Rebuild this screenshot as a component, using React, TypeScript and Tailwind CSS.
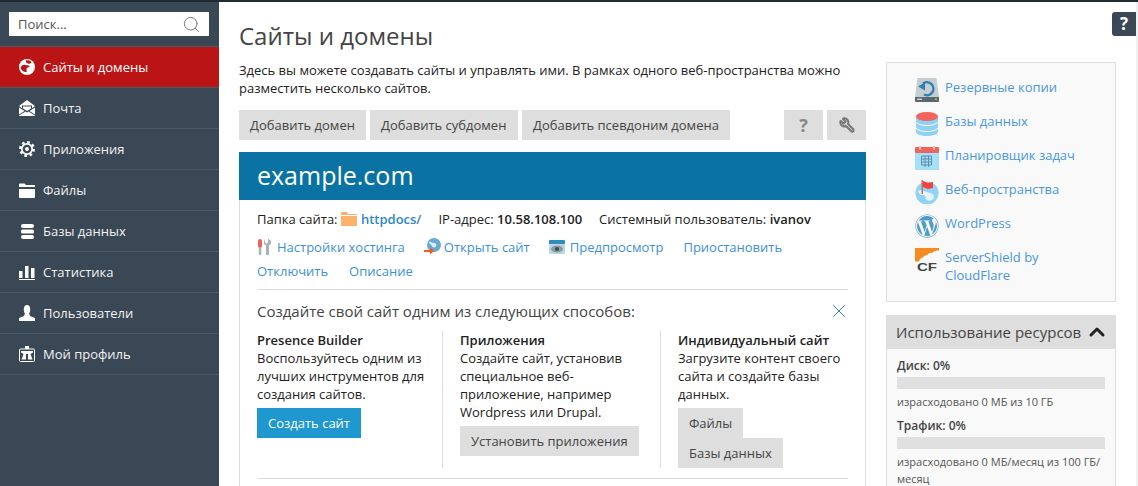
import { Search, X, ChevronUp, Wrench } from "lucide-react"
import { FaWordpress } from "react-icons/fa"
import type { ReactNode } from "react"

const GlobeIcon = () => (
  <svg width="16" height="16" viewBox="0 0 16 16">
    <circle cx="8" cy="8" r="8" fill="#fff" />
    <path d="M1.500 8.500C3 6 5 5.500 6.500 6s3.500 0 4 1-2.500 1.500-3 2.500 1 2 0 3.500c-2 .5-5-1-6-4.500zM7 1.500c2-.5 4 0 5.500 1.500 0 1.500-2 2-3.500 1.500S6.500 3 7 1.500z" fill="#bb1414" />
  </svg>
)
const MailIcon = () => (
  <svg width="16" height="16" viewBox="0 0 16 16" fill="#fff">
    <path d="M0 6 8 0l8 6-3 2.200V5.500H3v2.700z" />
    <path d="M4 6.500h8v2L8 11 4 8.500z" />
    <path d="M0 7.500l5.500 3.500L0 14.500zM16 7.500 10.500 11l5.500 3.500zM0 16v-.5l6.500-4L8 12.500l1.500-1 6.500 4v.5z" />
  </svg>
)
const GearIcon = () => (
  <svg width="16" height="16" viewBox="0 0 16 16">
    <circle cx="8" cy="8" r="5.200" fill="none" stroke="#fff" strokeWidth="1.800" />
    <circle cx="8" cy="8" r="6.800" fill="none" stroke="#fff" strokeWidth="2.400" strokeDasharray="2.600 2.740" />
    <circle cx="8" cy="8" r="2" fill="#fff" />
  </svg>
)
const FolderIcon = () => (
  <svg width="16" height="15" viewBox="0 0 16 15" fill="#fff">
    <path d="M0 1.500A1 1 0 0 1 1 .5h4.500L7 2h9v2H0z" />
    <path d="M0 6h16v8a1 1 0 0 1-1 1H1a1 1 0 0 1-1-1z" />
  </svg>
)
const DbIcon = () => (
  <svg width="13" height="15" viewBox="0 0 13 15" fill="#fff">
    <rect x="0" y="0" width="13" height="4" rx="2" />
    <rect x="0" y="5.500" width="13" height="4" rx="1.500" />
    <rect x="0" y="11" width="13" height="4" rx="2" />
  </svg>
)
const StatsIcon = () => (
  <svg width="16" height="15" viewBox="0 0 16 15" fill="#fff">
    <rect x="0" y="6" width="3.500" height="7" />
    <rect x="6" y="1" width="3.500" height="12" />
    <rect x="12" y="3" width="3.500" height="10" />
    <rect x="0" y="14" width="16" height="1" />
  </svg>
)
const UserIcon = () => (
  <svg width="16" height="16" viewBox="0 0 16 16" fill="#fff">
    <ellipse cx="8" cy="4.500" rx="3.200" ry="4.500" />
    <path d="M6 8h4l1 3 5 2v3H0v-3l5-2z" />
  </svg>
)
const ProfileIcon = () => (
  <svg width="16" height="16" viewBox="0 0 16 16">
    <rect x="0.500" y="3" width="15" height="12.500" rx="1" fill="none" stroke="#fff" />
    <rect x="6" y="0" width="4" height="3" fill="#fff" />
    <path d="M2 5h12v1.500l-2.500 1.500 2 5.500H9V8H7v5.500H2.500L4.500 8 2 6.500z" fill="#fff" />
  </svg>
)

const BackupIcon = () => (
  <svg width="24" height="24" viewBox="0 0 24 24">
    <path d="M2.500 0h19L24 19H0z" fill="#c5ced3" />
    <path d="M0 19h24v4a1 1 0 0 1-1 1H1a1 1 0 0 1-1-1z" fill="#5d676c" />
    <rect x="2" y="20.500" width="5" height="1.500" fill="#c5ced3" />
    <rect x="20" y="20.500" width="2" height="1.500" fill="#9bd24b" />
    <path d="M8 5.500a6.500 6.500 0 1 1 1 11" fill="none" stroke="#2f7fb0" strokeWidth="2.400" />
    <path d="M3 8.500l7-4v8z" fill="#2f7fb0" />
  </svg>
)
const ColorDbIcon = () => (
  <svg width="24" height="24" viewBox="0 0 24 24">
    <path d="M1 4.500h22V20c0 2-5 4-11 4S1 22 1 20z" fill="#8fd0f5" />
    <ellipse cx="12" cy="4.500" rx="11" ry="4.500" fill="#f4625c" />
    <path d="M1 10c2 2.500 6 3.500 11 3.500S21 12.500 23 10M1 16c2 2.500 6 3.500 11 3.500S21 18.500 23 16" fill="none" stroke="#fff" />
  </svg>
)
const CalendarIcon = () => (
  <svg width="24" height="24" viewBox="0 0 24 24">
    <rect x="0" y="2" width="24" height="22" fill="#a5e0fb" />
    <rect x="0" y="1" width="24" height="6" rx="1" fill="#f4625c" />
    <rect x="4" y="0" width="2" height="4" fill="#f9c4bf" />
    <rect x="18" y="0" width="2" height="4" fill="#f9c4bf" />
    <path d="M6.500 10h10v9h-10zM10 10v11M13.500 10v11M6.500 13h10M6.500 16h10" fill="none" stroke="#5f8fa8" />
  </svg>
)
const WebspaceIcon = () => (
  <svg width="24" height="24" viewBox="0 0 24 24">
    <circle cx="12" cy="13" r="11.500" fill="#8fd3f5" />
    <path d="M3 11c3-2 6 0 9 1s6 1 7 4-4 6-7 4 0-5-4-5-4-2-5-4z" fill="#e4f5fd" />
    <rect x="6.500" y="0" width="1.500" height="14" fill="#c96a66" />
    <path d="M8 1l5 2 5-1v6l-5 1-5-2z" fill="#f4423a" />
  </svg>
)
const CloudflareIcon = () => (
  <svg width="24" height="24" viewBox="0 0 24 24">
    <path d="M0 0h24v2.500c-3 0-5 .5-7 2.500-2-.5-4 .5-5 2.500-2-.5-3 .5-4 2-2 0-3 1-4 4H0z" fill="#f6891f" />
    <text x="12" y="23" textAnchor="middle" textLength="20" lengthAdjust="spacingAndGlyphs" fontFamily="'Liberation Sans', sans-serif" fontWeight="700" fontSize="11" fill="#444">CF</text>
  </svg>
)
const OrangeFolder = () => (
  <svg width="16" height="14" viewBox="0 0 16 14" className="mr-1 inline-block">
    <path d="M0 1a1 1 0 0 1 1-1h5l1 2h9v12H0z" fill="#fbb36b" />
    <rect x="0" y="3" width="16" height="1" fill="#fff" />
  </svg>
)
const HostingIcon = () => (
  <svg width="16" height="16" viewBox="0 0 16 16">
    <rect x="1" y="0" width="4" height="9" rx="2" fill="#f0625c" />
    <rect x="1.800" y="8" width="2.500" height="8" rx="1" fill="#aab2b6" />
    <path d="M8 0v3l1.500 2L11 3V0h.5c2 1 3 2 2.500 4-.5 1.500-1 2-2 2.500V15a1 1 0 0 1-3 0V6.500C7.500 6 7 5 7 3.500 7 2 7.500 1 8 0z" fill="#aab2b6" />
  </svg>
)
const OpenSiteIcon = () => (
  <svg width="17" height="17" viewBox="0 0 17 17">
    <circle cx="10" cy="7" r="7" fill="#69a9d2" />
    <path d="M5 4c2-1 3 1 5 1s3 1 2 3-3 2-4 0-3-2-3-4z" fill="#d9eefa" />
    <path d="M0 12h6V9.500l4 3.500-4 3.500V14H0z" fill="#f25a1e" />
  </svg>
)
const PreviewIcon = () => (
  <svg width="16" height="14" viewBox="0 0 16 14">
    <rect x="0" y="0" width="16" height="14" rx="1.500" fill="#b8d8e8" />
    <rect x="0" y="0" width="16" height="4" rx="1" fill="#2f8dbb" />
    <ellipse cx="8" cy="9" rx="6" ry="3.500" fill="#8a9aa2" />
    <circle cx="8" cy="9" r="2" fill="#3d4a52" />
  </svg>
)

const NAV: { label: string; icon: ReactNode; active?: boolean }[] = [
  { label: "Сайты и домены", icon: <GlobeIcon />, active: true },
  { label: "Почта", icon: <MailIcon /> },
  { label: "Приложения", icon: <GearIcon /> },
  { label: "Файлы", icon: <FolderIcon /> },
  { label: "Базы данных", icon: <DbIcon /> },
  { label: "Статистика", icon: <StatsIcon /> },
  { label: "Пользователи", icon: <UserIcon /> },
  { label: "Мой профиль", icon: <ProfileIcon /> },
]

const TOOLS: { label: string; icon: ReactNode }[] = [
  { label: "Резервные копии", icon: <BackupIcon /> },
  { label: "Базы данных", icon: <ColorDbIcon /> },
  { label: "Планировщик задач", icon: <CalendarIcon /> },
  { label: "Веб-пространства", icon: <WebspaceIcon /> },
  { label: "WordPress", icon: <FaWordpress size={24} className="text-[#4f9cc6]" /> },
  { label: "ServerShield by CloudFlare", icon: <CloudflareIcon /> },
]

function GrayButton({ children, className = "" }: { children: ReactNode; className?: string }) {
  return <div className={`flex h-[30px] items-center bg-[#dedede] px-[11px] text-[#444] ${className}`}>{children}</div>
}

export default function App() {
  return (
    <div className="relative flex h-[486px] w-[1138px] overflow-hidden border-t-2 border-[#1f2a33] bg-white font-['Open_Sans',sans-serif] text-[13px] leading-[18px] text-[#222]">
      {/* Sidebar */}
      <aside className="w-[219px] shrink-0 bg-[#3a4754]">
        <div className="pt-[10px] pr-[10px] pb-[10px] pl-[9px]">
          <div className="flex h-6 items-center justify-between bg-white pr-2 pl-[9px] text-[#555]">
            <span>Поиск...</span>
            <Search size={19} strokeWidth={1.25} className="text-[#777]" />
          </div>
        </div>
        <nav className="border-t border-[#4a5a69]">
          {NAV.map((item) => (
            <div
              key={item.label}
              className={`flex h-[41px] items-center gap-2 border-b border-[#4a5a69] pl-[19px] ${
                item.active ? "bg-[#bb1414] text-white" : "text-[#f2f2f2]"
              }`}
            >
              <span className="flex w-4 justify-center">{item.icon}</span>
              <span className={item.active ? "" : "font-medium"}>{item.label}</span>
            </div>
          ))}
        </nav>
      </aside>

      {/* Main */}
      <main className="w-[647px] shrink-0 pt-[17px] pl-5">
        <h1 className="text-[24px] leading-[33px] font-normal text-[#444]">Сайты и домены</h1>
        <p className="mt-[9px] w-[620px] text-[#222]">
          Здесь вы можете создавать сайты и управлять ими. В рамках одного веб-пространства можно разместить несколько
          сайтов.
        </p>
        <div className="mt-[13px] flex">
          <div className="flex gap-1">
            <GrayButton className="w-[127px]">Добавить домен</GrayButton>
            <GrayButton className="w-[148px]">Добавить субдомен</GrayButton>
            <GrayButton className="w-[208px]">Добавить псевдоним домена</GrayButton>
          </div>
          <div className="ml-auto flex gap-1">
            <GrayButton className="w-[39px] justify-center px-0 text-[18px] font-bold text-[#888]">?</GrayButton>
            <GrayButton className="w-[39px] justify-center px-0">
              <Wrench size={16} strokeWidth={3} className="-scale-x-100 text-[#777]" />
            </GrayButton>
          </div>
        </div>

        {/* Site card */}
        <section className="mt-3 h-[400px] border-x border-[#ddd]">
          <div className="-mx-px flex h-12 items-center bg-[#0a73a3] pb-[3px] pl-[18px] text-[25px] text-white">example.com</div>
          <div className="px-[17px] pt-[9px]">
            <div className="flex h-[19px] items-center">
              <span>Папка сайта:&nbsp;</span>
              <OrangeFolder />
              <span className="font-semibold text-[#2e87c8]">httpdocs/</span>
              <span className="ml-[17px]">
                IP-адрес: <span className="font-semibold">10.58.108.100</span>
              </span>
              <span className="ml-[17px]">
                Системный пользователь: <span className="font-semibold">ivanov</span>
              </span>
            </div>
            <div className="mt-[9px] flex h-[19px] items-center text-[#3e8fd6]">
              <span className="mr-1"><HostingIcon /></span>
              <span>Настройки хостинга</span>
              <span className="mr-[3px] ml-[19px]"><OpenSiteIcon /></span>
              <span>Открыть сайт</span>
              <span className="mr-[5px] ml-[19px]"><PreviewIcon /></span>
              <span>Предпросмотр</span>
              <span className="ml-[20px]">Приостановить</span>
            </div>
            <div className="mt-[5px] flex h-[19px] items-center gap-[21px] text-[#3e8fd6]">
              <span>Отключить</span>
              <span>Описание</span>
            </div>

            <div className="mt-[9px] border-t border-[#ddd] pt-[10px]">
              <div className="flex h-[22px] items-center justify-between">
                <div className="text-[15px] leading-[22px] text-[#444]">Создайте свой сайт одним из следующих способов:</div>
                <X size={22} strokeWidth={1} className="-mr-[2px] -mt-px text-[#1d6fa5]" />
              </div>
              <div className="mt-[9px] flex h-[137px]">
                <div className="w-[186px] shrink-0 border-r border-[#ddd] pr-3">
                  <div className="font-semibold text-[#222]">Presence Builder</div>
                  <div>Воспользуйтесь одним из лучших инструментов для создания сайтов.</div>
                  <div className="mt-[5px] flex h-[30px] w-[104px] items-center justify-center bg-[#1e98cf] text-white">Создать сайт</div>
                </div>
                <div className="w-[218px] shrink-0 border-r border-[#ddd] pr-3 pl-[17px]">
                  <div className="font-semibold text-[#222]">Приложения</div>
                  <div>Создайте сайт, установив специальное веб-приложение, например Wordpress или Drupal.</div>
                  <GrayButton className="mt-[5px] w-fit">Установить приложения</GrayButton>
                </div>
                <div className="w-[187px] shrink-0 pr-1 pl-[17px]">
                  <div className="font-semibold text-[#222]">Индивидуальный сайт</div>
                  <div>Загрузите контент своего сайта и создайте базы данных.</div>
                  <GrayButton className="mt-[5px] w-fit">Файлы</GrayButton>
                  <GrayButton className="w-fit">Базы данных</GrayButton>
                </div>
              </div>
              <div className="mt-[10px] border-t border-[#ddd]" />
            </div>
          </div>
        </section>
      </main>

      {/* Right column */}
      <aside className="ml-5 w-[230px] shrink-0 pt-[60px]">
        <div className="h-[240px] border border-[#ddd] bg-[#f9f9f9] pt-[15px] pl-[28px]">
          {TOOLS.map((tool) => (
            <div key={tool.label} className="mb-[10px] flex gap-[6px]">
              <span className="h-6 w-6 shrink-0">{tool.icon}</span>
              <span className="w-[130px] text-[#4a97dd]">{tool.label}</span>
            </div>
          ))}
        </div>
        <div className="mt-[13px] border-x border-[#ddd] bg-[#f9f9f9]">
          <div className="-mx-px flex h-[34px] items-center gap-1 bg-[#dedede] pl-[10px] text-[15px] text-[#444]">
            <span>Использование ресурсов</span>
            <ChevronUp size={24} strokeWidth={3} className="text-[#222]" />
          </div>
          <div className="px-[10px] pt-2 text-[11px] leading-[17px] text-[#555]">
            <div className="text-[12px] font-semibold text-[#444]">Диск: 0%</div>
            <div className="mt-[3px] h-3 bg-[#e0e0e0]" />
            <div className="mt-[4px]">израсходовано 0 МБ из 10 ГБ</div>
            <div className="mt-[7px] text-[12px] font-semibold text-[#444]">Трафик: 0%</div>
            <div className="mt-[3px] h-3 bg-[#e0e0e0]" />
            <div className="mt-[4px]">израсходовано 0 МБ/месяц из 100 ГБ/ месяц</div>
          </div>
        </div>
      </aside>

      {/* Help tab */}
      <div className="absolute top-[10px] right-[2px] flex h-6 w-6 items-center justify-center rounded-l-[3px] bg-[#3a4754] text-[17px] font-bold text-white">?</div>
      <div className="absolute top-0 right-0 bottom-0 w-[2px] bg-[#f0f0f0]" />
    </div>
  )
}
